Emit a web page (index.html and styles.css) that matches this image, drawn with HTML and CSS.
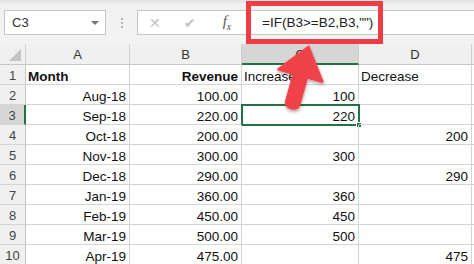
FILE: index.html
```html
<!DOCTYPE html>
<html lang="en">
<head>
    <meta charset="UTF-8">
    <title>Excel - IF formula</title>
    <link rel="stylesheet" href="styles.css">
</head>
<body>
    <div class="sheet">
        <!-- formula bar -->
        <div class="formula-bar">
            <div class="name-box">
                <span>C3</span>
                <span class="caret"></span>
            </div>
            <div class="grip"><i></i><i></i><i></i></div>
            <div class="formula-box">
                <span class="fb-icon cancel">&#x2715;</span>
                <span class="fb-icon enter">&#x2714;</span>
                <span class="fb-icon fx">f<sub>x</sub></span>
                <span class="formula-text">=IF(B3&gt;=B2,B3,"")</span>
            </div>
        </div>

        <!-- grid -->
        <div class="grid">
            <div class="hdr corner"><span class="tri"></span></div>
            <div class="hdr">A</div>
            <div class="hdr">B</div>
            <div class="hdr active-col">C</div>
            <div class="hdr">D</div>
            <div class="hdr"></div>

            <div class="rowhdr">1</div>
            <div class="cell bold">Month</div>
            <div class="cell bold num">Revenue</div>
            <div class="cell">Increase</div>
            <div class="cell">Decrease</div>
            <div class="cell"></div>

            <div class="rowhdr">2</div>
            <div class="cell num">Aug-18</div>
            <div class="cell num">100.00</div>
            <div class="cell num">100</div>
            <div class="cell num"></div>
            <div class="cell"></div>

            <div class="rowhdr active-row">3</div>
            <div class="cell num">Sep-18</div>
            <div class="cell num">220.00</div>
            <div class="cell num selected">220<span class="handle"></span></div>
            <div class="cell num"></div>
            <div class="cell"></div>

            <div class="rowhdr">4</div>
            <div class="cell num">Oct-18</div>
            <div class="cell num">200.00</div>
            <div class="cell num"></div>
            <div class="cell num">200</div>
            <div class="cell"></div>

            <div class="rowhdr">5</div>
            <div class="cell num">Nov-18</div>
            <div class="cell num">300.00</div>
            <div class="cell num">300</div>
            <div class="cell num"></div>
            <div class="cell"></div>

            <div class="rowhdr">6</div>
            <div class="cell num">Dec-18</div>
            <div class="cell num">290.00</div>
            <div class="cell num"></div>
            <div class="cell num">290</div>
            <div class="cell"></div>

            <div class="rowhdr">7</div>
            <div class="cell num">Jan-19</div>
            <div class="cell num">360.00</div>
            <div class="cell num">360</div>
            <div class="cell num"></div>
            <div class="cell"></div>

            <div class="rowhdr">8</div>
            <div class="cell num">Feb-19</div>
            <div class="cell num">450.00</div>
            <div class="cell num">450</div>
            <div class="cell num"></div>
            <div class="cell"></div>

            <div class="rowhdr">9</div>
            <div class="cell num">Mar-19</div>
            <div class="cell num">500.00</div>
            <div class="cell num">500</div>
            <div class="cell num"></div>
            <div class="cell"></div>

            <div class="rowhdr">10</div>
            <div class="cell num">Apr-19</div>
            <div class="cell num">475.00</div>
            <div class="cell num"></div>
            <div class="cell num">475</div>
            <div class="cell"></div>
        </div>

        <!-- annotation: red highlight box + arrow -->
        <div class="highlight"></div>
        <svg class="arrow" viewBox="0 0 474 264" width="474" height="264">
            <defs>
                <filter id="shadow" x="-20%" y="-20%" width="140%" height="140%">
                    <feDropShadow dx="1" dy="2" stdDeviation="1.5" flood-color="#000" flood-opacity="0.3"/>
                </filter>
            </defs>
            <g transform="translate(309 45) rotate(15.7)" filter="url(#shadow)">
                <path d="M0 0 L24 31 Q25 33 22 33 L8 33 L8 60 Q8 67 0 67 Q-8 67 -8 60 L-8 33 L-22 33 Q-25 33 -24 31 Z" fill="#ef434a"/>
            </g>
        </svg>
    </div>
</body>
</html>
```

FILE: styles.css
```css
* {
    margin: 0;
    padding: 0;
    box-sizing: border-box;
}

body {
    width: 474px;
    height: 264px;
    overflow: hidden;
    background: #ffffff;
    font-family: 'Liberation Sans', Arial, sans-serif;
}

.sheet {
    position: relative;
    width: 474px;
    height: 264px;
}

/* ---------- formula bar ---------- */
.formula-bar {
    height: 44px;
    display: flex;
    align-items: flex-start;
    padding: 10px 0 0 4px;
    background: linear-gradient(#e2e2e2 0, #f1f1f1 5px, #f3f3f3 100%);
}

.name-box {
    width: 102px;
    height: 25px;
    background: #fff;
    border: 1px solid #c6c6c6;
    display: flex;
    align-items: center;
    justify-content: space-between;
    padding: 0 6px 0 7px;
    font-size: 13px;
    color: #333;
}

.caret {
    width: 0;
    height: 0;
    border-left: 4px solid transparent;
    border-right: 4px solid transparent;
    border-top: 4px solid #777;
}

.grip {
    width: 31px;
    height: 25px;
    display: flex;
    flex-direction: column;
    align-items: center;
    justify-content: center;
    gap: 2px;
}

.grip i {
    width: 2px;
    height: 2px;
    background: #b5b5b5;
}

.formula-box {
    flex: 1;
    height: 25px;
    background: #fff;
    border: 1px solid #c6c6c6;
    border-right: none;
    display: flex;
    align-items: center;
}

.fb-icon {
    color: #c3c3c3;
    font-size: 14px;
    text-align: center;
}

.cancel {
    width: 22px;
    margin-left: 6px;
}

.enter {
    width: 22px;
    margin-left: 13px;
}

.fx {
    width: 20px;
    margin-left: 16px;
    color: #555;
    font-family: 'Liberation Serif', serif;
    font-style: italic;
    font-size: 15px;
}

.fx sub {
    font-size: 10px;
}

.formula-text {
    margin-left: 25px;
    font-size: 13.5px;
    color: #222;
}

/* ---------- grid ---------- */
.grid {
    display: grid;
    grid-template-columns: 26px 104px 112px 117px 113px 1fr;
    grid-auto-rows: 20px;
    grid-template-rows: 21px;
    font-size: 13.5px;
    color: #111;
}

.hdr {
    background: #f0f0f0;
    border-right: 1px solid #d0d0d0;
    border-bottom: 1px solid #c6c6c6;
    display: flex;
    align-items: center;
    justify-content: center;
    font-size: 13px;
    color: #333;
    padding-top: 1px;
}

.corner {
    position: relative;
}

.tri {
    position: absolute;
    right: 4px;
    bottom: 3px;
    width: 0;
    height: 0;
    border-left: 12px solid transparent;
    border-bottom: 12px solid #c4c4c4;
}

.active-col {
    background: #d6d6d6;
    border-bottom: 2px solid #217346;
}

.rowhdr {
    background: #f0f0f0;
    border-right: 1px solid #c6c6c6;
    border-bottom: 1px solid #d6d6d6;
    display: flex;
    align-items: center;
    justify-content: center;
    font-size: 13px;
    color: #444;
    padding-top: 2px;
}

.active-row {
    background: #d6d6d6;
    border-right: 2px solid #217346;
}

.cell {
    position: relative;
    border-right: 1px solid #d4d4d4;
    border-bottom: 1px solid #d4d4d4;
    padding: 3px 3px 0 2px;
    white-space: nowrap;
    line-height: 17px;
}

.num {
    text-align: right;
}

.bold {
    font-weight: bold;
}

.selected {
    outline: 2px solid #217346;
    outline-offset: -1px;
}

.handle {
    position: absolute;
    right: -4px;
    bottom: -4px;
    width: 6px;
    height: 6px;
    background: #217346;
    border: 1px solid #fff;
}

/* ---------- annotation ---------- */
.highlight {
    position: absolute;
    left: 246px;
    top: 1px;
    width: 137px;
    height: 43px;
    border: 5px solid #ee3d44;
}

.arrow {
    position: absolute;
    left: 0;
    top: 0;
    pointer-events: none;
}
```
